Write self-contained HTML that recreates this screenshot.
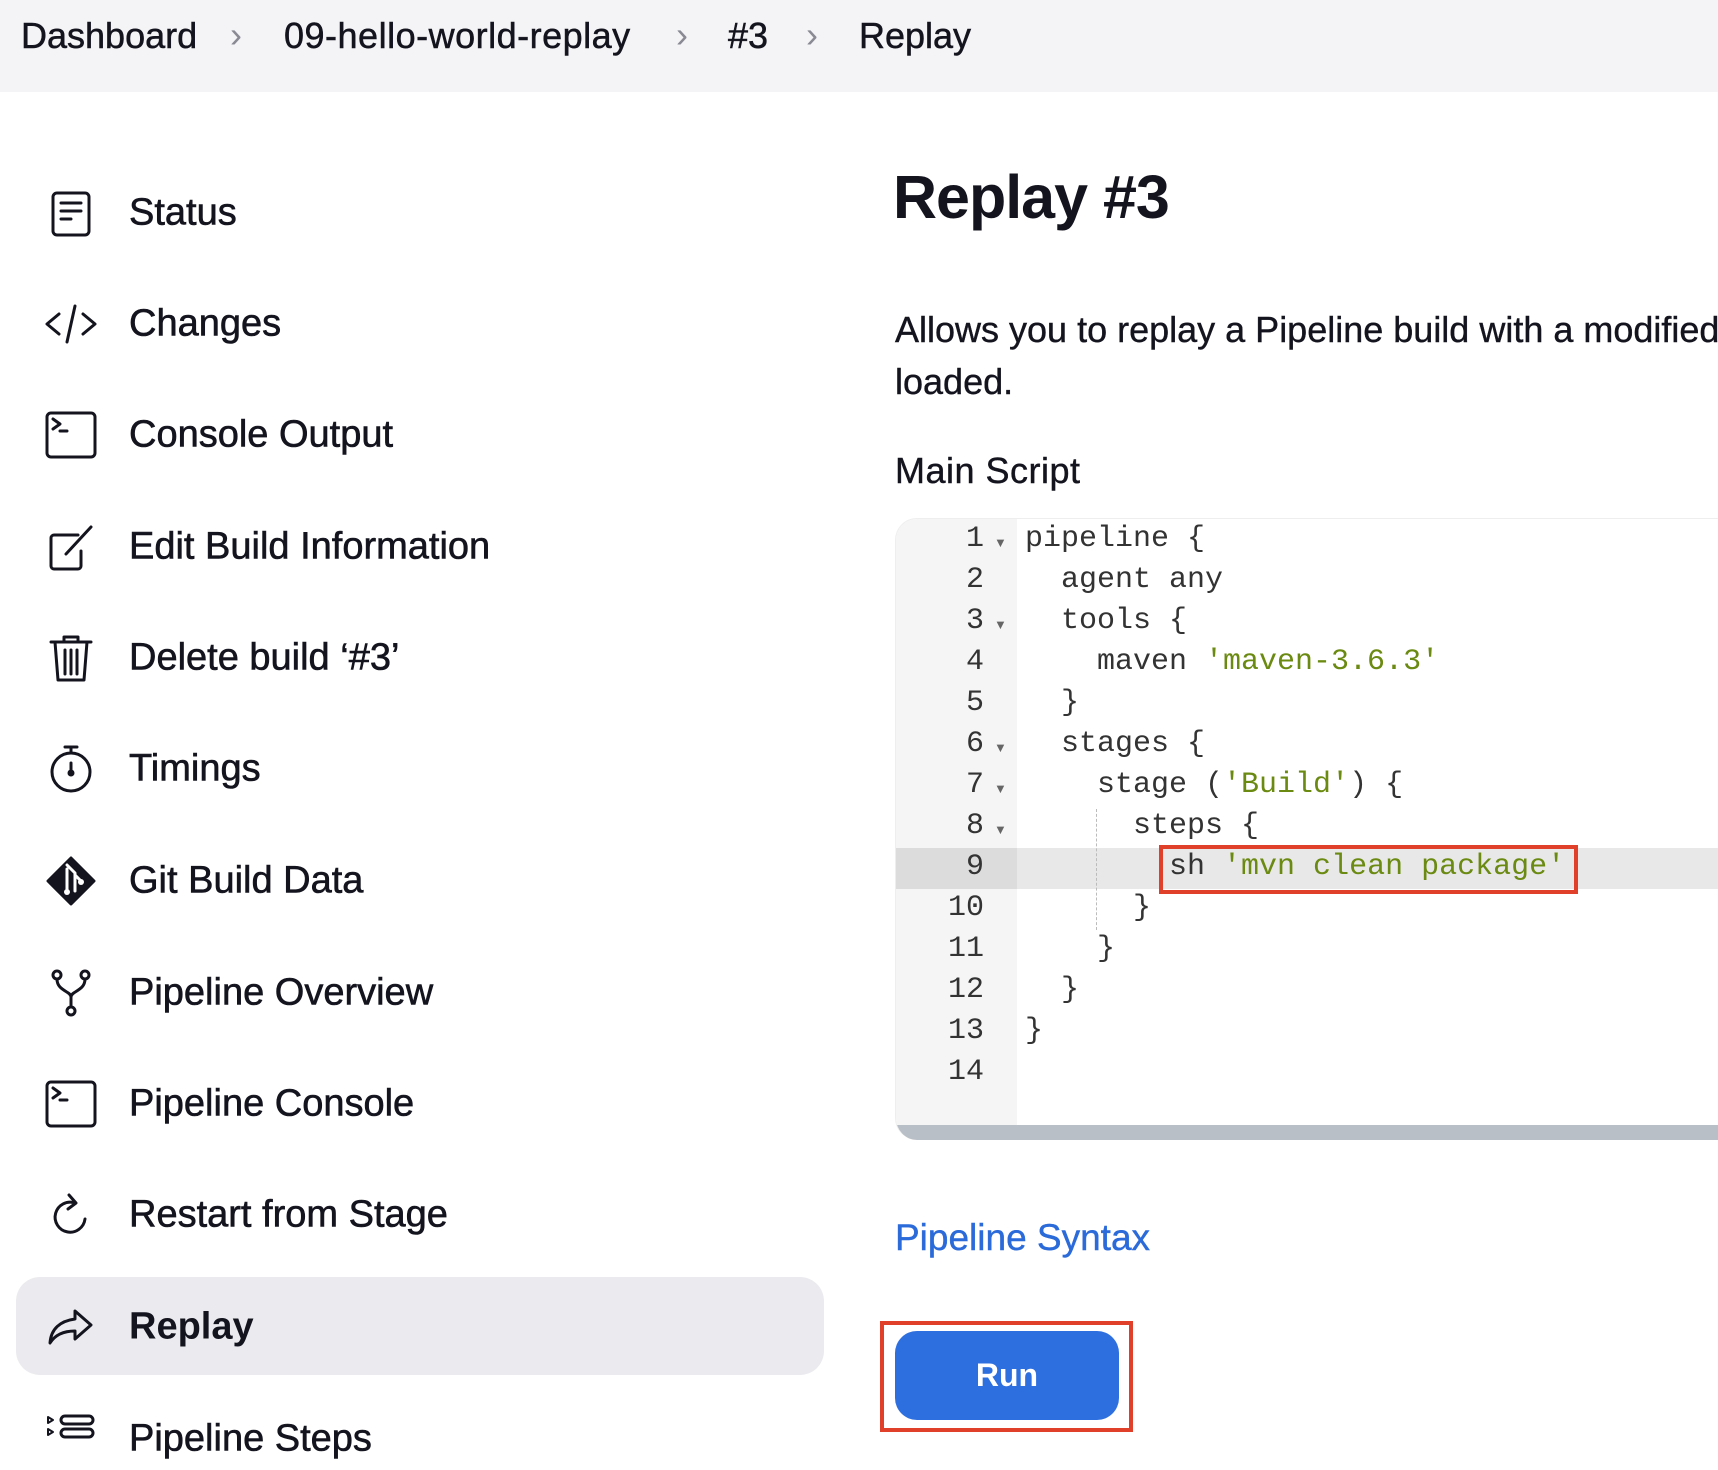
<!DOCTYPE html>
<html><head><meta charset="utf-8"><style>
*{margin:0;padding:0;box-sizing:border-box}
body{width:1718px;height:1442px;overflow:hidden;background:#fff;font-family:"Liberation Sans",sans-serif;color:#14141f;position:relative}
.hdr{position:absolute;left:0;top:0;width:1718px;height:92px;background:#f4f4f6}
.bc{position:absolute;top:15px;font-size:36px;color:#14141f;white-space:nowrap;-webkit-text-stroke:0.5px #14141f}
.sep{position:absolute;top:14px;font-size:36px;color:#8a8a95}
.it{position:absolute;left:129px;font-size:38px;white-space:nowrap;transform:translateY(-50%);-webkit-text-stroke:0.6px #14141f}
.ic{position:absolute;left:45px;width:52px;height:52px;transform:translateY(-50%)}
.ic svg{width:52px;height:52px;fill:none;stroke:#14141f;stroke-width:3;stroke-linecap:round;stroke-linejoin:round}
.sel{position:absolute;left:16px;top:1277px;width:808px;height:98px;background:#ebebef;border-radius:24px}
h1{position:absolute;left:893px;top:162px;font-size:61px;font-weight:bold;letter-spacing:-1px}
.p{position:absolute;left:895px;font-size:36px;white-space:nowrap;-webkit-text-stroke:0.4px #14141f}
.ed{position:absolute;left:895px;top:518px;width:823px;height:622px;background:#fff;border-top:1px solid #eee;border-left:1px solid #eee;border-radius:22px 0 0 22px;overflow:hidden}
.gut{position:absolute;left:0;top:0;width:121px;height:622px;background:#f5f5f5}
.hl{position:absolute;left:0;top:329px;width:823px;height:41px;background:#e8e8e8}
.hlg{position:absolute;left:0;top:329px;width:121px;height:41px;background:#dcdcdc}
.ln{position:absolute;width:88px;text-align:right;font-family:"Liberation Mono",monospace;font-size:30px;color:#333}
.fa{position:absolute;left:98px;font-size:13px;color:#666}
.cd{position:absolute;left:129px;font-family:"Liberation Mono",monospace;font-size:30px;color:#333;white-space:pre}
.s{color:#6b8a12}
.sb{position:absolute;left:0;bottom:0;width:823px;height:15px;background:#b9bfc6}
</style></head><body>
<div class="hdr"></div>
<div class="bc" style="left:21px">Dashboard</div>
<div class="sep" style="left:230px">&#x203A;</div>
<div class="bc" style="left:284px;letter-spacing:0.5px">09-hello-world-replay</div>
<div class="sep" style="left:676px">&#x203A;</div>
<div class="bc" style="left:728px">#3</div>
<div class="sep" style="left:806px">&#x203A;</div>
<div class="bc" style="left:859px">Replay</div>

<div class="sel"></div>
<div class="ic" style="top:213px"><svg viewBox="0 0 52 52"><rect x="8" y="6" width="36" height="42" rx="4"/><path d="M16 16h20M16 24h20M16 32h10"/></svg></div>
<div class="it" style="top:213px">Status</div>
<div class="ic" style="top:324px"><svg viewBox="0 0 52 52"><path d="M14 16 2 26l12 10M38 16l12 10-12 10M30 8 22 44"/></svg></div>
<div class="it" style="top:324px">Changes</div>
<div class="ic" style="top:435px"><svg viewBox="0 0 52 52"><rect x="2" y="4" width="48" height="44" rx="4"/><path d="M8 10l7 5-7 5M15 22h7"/></svg></div>
<div class="it" style="top:435px">Console Output</div>
<div class="ic" style="top:547px"><svg viewBox="0 0 52 52"><path d="M33 14H9a3 3 0 0 0-3 3v28a3 3 0 0 0 3 3h24a3 3 0 0 0 3-3V30M21 33 46 6"/></svg></div>
<div class="it" style="top:547px">Edit Build Information</div>
<div class="ic" style="top:658px"><svg viewBox="0 0 52 52"><path d="M6 10h40M19 10V5h14v5M10 10l3 38h26l3-38M20 18v24M26 18v24M32 18v24"/></svg></div>
<div class="it" style="top:658px">Delete build ‘#3’</div>
<div class="ic" style="top:769px"><svg viewBox="0 0 52 52"><circle cx="26" cy="29" r="19"/><path d="M20 4h12M26 4v6M26 20v10"/><circle cx="26" cy="30" r="2"/></svg></div>
<div class="it" style="top:769px">Timings</div>
<div class="ic" style="top:881px"><svg viewBox="0 0 52 52"><path d="M26 3 49 26 26 49 3 26Z" fill="#14141f"/><path d="M22 10l8 8v18M22 14v22M30 20l6 6" stroke="#fff" stroke-width="3"/><circle cx="22" cy="37" r="3" fill="#fff" stroke="none"/><circle cx="36" cy="27" r="3" fill="#fff" stroke="none"/></svg></div>
<div class="it" style="top:881px">Git Build Data</div>
<div class="ic" style="top:993px"><svg viewBox="0 0 52 52"><circle cx="12" cy="8" r="4"/><circle cx="40" cy="8" r="4"/><circle cx="26" cy="44" r="4"/><path d="M12 12c0 12 14 12 14 18v10M40 12c0 12-14 12-14 18"/></svg></div>
<div class="it" style="top:993px">Pipeline Overview</div>
<div class="ic" style="top:1104px"><svg viewBox="0 0 52 52"><rect x="2" y="4" width="48" height="44" rx="4"/><path d="M8 10l7 5-7 5M15 22h7"/></svg></div>
<div class="it" style="top:1104px">Pipeline Console</div>
<div class="ic" style="top:1215px"><svg viewBox="0 0 52 52"><path d="M40 30a15 15 0 1 1-10-16M24 6l7 8-8 6"/></svg></div>
<div class="it" style="top:1215px">Restart from Stage</div>
<div class="ic" style="top:1327px"><svg viewBox="0 0 52 52"><path d="M30 10l16 14-16 14v-8C18 30 10 34 5 42c1-14 10-22 25-24Z"/></svg></div>
<div class="it" style="top:1327px;font-weight:bold;-webkit-text-stroke:0">Replay</div>
<div class="ic" style="top:1439px"><svg viewBox="0 0 52 52"><path d="M3 4l5 3-5 3ZM3 16l5 3-5 3Z" stroke-width="2"/><rect x="16" y="3" width="32" height="8" rx="4"/><rect x="16" y="16" width="32" height="8" rx="4"/></svg></div>
<div class="it" style="top:1439px">Pipeline Steps</div>

<h1>Replay #3</h1>
<div class="p" style="top:309px">Allows you to replay a Pipeline build with a modified script. The script will be</div>
<div class="p" style="top:361px">loaded.</div>
<div class="p" style="top:450px;letter-spacing:0.5px">Main Script</div>

<div class="ed">
<div class="gut"></div><div class="hl"></div><div class="hlg"></div>
<div style="position:absolute;left:200px;top:290px;height:121px;border-left:1px dashed #bbb"></div>
<div class="ln" style="top:3px">1</div><div class="fa" style="top:16px">&#9660;</div><div class="cd" style="top:3px">pipeline {</div>
<div class="ln" style="top:44px">2</div><div class="cd" style="top:44px">  agent any</div>
<div class="ln" style="top:85px">3</div><div class="fa" style="top:98px">&#9660;</div><div class="cd" style="top:85px">  tools {</div>
<div class="ln" style="top:126px">4</div><div class="cd" style="top:126px">    maven <span class="s">'maven-3.6.3'</span></div>
<div class="ln" style="top:167px">5</div><div class="cd" style="top:167px">  }</div>
<div class="ln" style="top:208px">6</div><div class="fa" style="top:221px">&#9660;</div><div class="cd" style="top:208px">  stages {</div>
<div class="ln" style="top:249px">7</div><div class="fa" style="top:262px">&#9660;</div><div class="cd" style="top:249px">    stage (<span class="s">'Build'</span>) {</div>
<div class="ln" style="top:290px">8</div><div class="fa" style="top:303px">&#9660;</div><div class="cd" style="top:290px">      steps {</div>
<div class="ln" style="top:331px">9</div><div class="cd" style="top:331px">        sh <span class="s">'mvn clean package'</span></div>
<div class="ln" style="top:372px">10</div><div class="cd" style="top:372px">      }</div>
<div class="ln" style="top:413px">11</div><div class="cd" style="top:413px">    }</div>
<div class="ln" style="top:454px">12</div><div class="cd" style="top:454px">  }</div>
<div class="ln" style="top:495px">13</div><div class="cd" style="top:495px">}</div>
<div class="ln" style="top:536px">14</div>
<div class="sb"></div>
</div>
<div style="position:absolute;left:1159px;top:845px;width:419px;height:49px;border:4px solid #e0402a"></div>

<div class="p" style="top:1217px;color:#2a6ad9;font-size:37px;-webkit-text-stroke:0.4px #2a6ad9">Pipeline Syntax</div>
<div style="position:absolute;left:880px;top:1321px;width:253px;height:111px;border:4px solid #e0402a"></div>
<div style="position:absolute;left:895px;top:1331px;width:224px;height:89px;background:#2e6fdf;border-radius:22px;color:#fff;font-weight:bold;font-size:32px;text-align:center;line-height:89px">Run</div>
</body></html>
